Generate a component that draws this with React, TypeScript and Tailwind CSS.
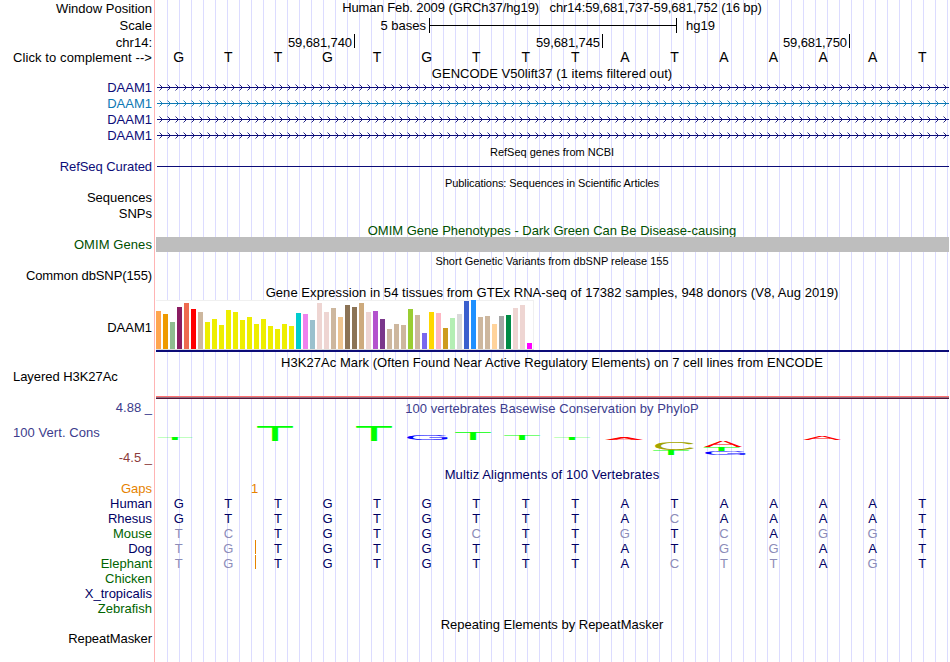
import type { ReactNode } from "react";
import clsx from "clsx";

const SEQUENCE = "GTTGTGTTTATAAAAT";

const GENES = [
  { label: "text-[#0c0c78]", line: "text-[#0c0c78]" },
  { label: "text-[#0c78b4]", line: "text-[#0c78b4]" },
  { label: "text-[#0c0c78]", line: "text-[#0c0c78]" },
  { label: "text-[#0c0c78]", line: "text-[#0c0c78]" },
];

// [height, colour] for each GTEx tissue
const TISSUES: [number, string][] = [
  [38, "#ffa54f"], [35, "#ee9a00"], [27, "#8fbc8f"], [42, "#8b1c62"], [46, "#ee6a50"], [40, "#ff0000"],
  [37, "#cdb79e"], [27, "#eeee00"], [30, "#eeee00"], [24, "#eeee00"], [39, "#eeee00"], [37, "#eeee00"],
  [29, "#eeee00"], [32, "#eeee00"], [25, "#eeee00"], [30, "#eeee00"], [23, "#eeee00"], [20, "#eeee00"],
  [25, "#eeee00"], [23, "#eeee00"], [36, "#00cdcd"], [35, "#ee82ee"], [29, "#9ac0cd"], [46, "#eed5d2"],
  [37, "#eed5d2"], [41, "#cdb79e"], [32, "#eec591"], [44, "#8b7355"], [42, "#8b7355"], [46, "#cdaa7d"],
  [37, "#eed5d2"], [38, "#b452cd"], [30, "#7a378b"], [20, "#cdb79e"], [25, "#cdb79e"], [24, "#cdb79e"],
  [40, "#9acd32"], [34, "#cdb79e"], [16, "#7a67ee"], [37, "#ffd700"], [36, "#ffb6c1"], [21, "#cd9b1d"],
  [31, "#b4eeb4"], [35, "#d9d9d9"], [48, "#3a5fcd"], [49, "#1e90ff"], [32, "#cdb79e"], [33, "#cdb79e"],
  [25, "#ffd39b"], [33, "#a6a6a6"], [34, "#008b45"], [41, "#eed5d2"], [44, "#eed5d2"], [6, "#ff00ff"],
];

const SPECIES = [
  { name: "Human", bases: SEQUENCE, green: false },
  { name: "Rhesus", bases: "GTTGTGTTTACAAAAT", green: false },
  { name: "Mouse", bases: "TCTGTGCTTGTCAGGT", green: true },
  { name: "Dog", bases: "TGTGTGTTTATGGAAT", green: false, insert: true },
  { name: "Elephant", bases: "TGTGTGTTTACTTAGT", green: true, insert: true },
  { name: "Chicken", bases: "", green: true },
  { name: "X_tropicalis", bases: "", green: false },
  { name: "Zebrafish", bases: "", green: true },
];

// ink box of each letter at font size 100: left, width, bottom, height
const INK: Record<string, [number, number, number, number]> = {
  A: [0.2, 66.3, 0, 68.8],
  C: [5, 63.3, -1, 70.8],
  G: [5, 66.6, -1, 70.8],
  T: [2, 57, 0, 68.8],
};

const LOGO = [
  { c: "T", x: 2.5, y: 21.2, w: 35, h: 1.8, fill: "#00ff00" },
  { c: "T", x: 102, y: 9, w: 36, h: 15, fill: "#00ff00" },
  { c: "T", x: 201, y: 9, w: 36, h: 15, fill: "#00ff00" },
  { c: "G", x: 252, y: 18, w: 41, h: 4.6, fill: "#0000ff" },
  { c: "T", x: 300, y: 16, w: 36, h: 7, fill: "#00ff00" },
  { c: "T", x: 349, y: 18, w: 36, h: 5, fill: "#00ff00" },
  { c: "T", x: 399, y: 21, w: 36, h: 2, fill: "#00ff00" },
  { c: "A", x: 450, y: 20.8, w: 38, h: 2, fill: "#ff0000" },
  { c: "C", x: 500, y: 25, w: 39, h: 8, fill: "#a5a500" },
  { c: "T", x: 498, y: 33, w: 36, h: 5, fill: "#00ff00" },
  { c: "A", x: 549, y: 24, w: 38, h: 6, fill: "#ff0000" },
  { c: "T", x: 548.5, y: 30, w: 36, h: 4, fill: "#00ff00" },
  { c: "G", x: 550, y: 34, w: 41, h: 4, fill: "#0000ff" },
  { c: "A", x: 648, y: 19, w: 38, h: 4, fill: "#ff0000" },
];

function Row({ label, labelClass, className, children }: {
  label?: string;
  labelClass?: string;
  className: string;
  children?: ReactNode;
}) {
  return (
    <div className={clsx("flex", className)}>
      <div className={clsx("flex w-[155px] shrink-0 items-center justify-end pr-[3px]", labelClass)}>{label}</div>
      <div className="min-w-0 flex-1">{children}</div>
    </div>
  );
}

function Title({ children, className = "h-[15px]", small }: { children: ReactNode; className?: string; small?: boolean }) {
  return (
    <Row className={className}>
      <div className={clsx("flex h-full items-center justify-center", small && "text-[11px]")}>{children}</div>
    </Row>
  );
}

function Bases({ bases, compare }: { bases: string; compare?: boolean }) {
  return (
    <div className="-ml-px grid h-full w-[793px] grid-cols-16 items-center text-center">
      {bases.split("").map((base, i) => (
        <span key={i} className={clsx(compare && (base === SEQUENCE[i] ? "text-[#000064]" : "text-[#8c8cb8]"))}>
          {base}
        </span>
      ))}
    </div>
  );
}

function Strand({ id, className }: { id: string; className: string }) {
  return (
    <svg width="792" height="16" className={clsx("ml-[2px] block", className)}>
      <defs>
        <pattern id={id} width="8" height="16" patternUnits="userSpaceOnUse">
          <path d="M2.5 4.5L5.5 7.5L2.5 10.5" fill="none" stroke="currentColor" strokeWidth="0.9" />
        </pattern>
      </defs>
      <rect width="792" height="16" fill={`url(#${id})`} />
      <rect y="7" width="792" height="1" fill="currentColor" />
    </svg>
  );
}

function Logo() {
  return (
    <svg width="794" height="49" className="block font-['Liberation_Sans',Arial,sans-serif]">
      {LOGO.map(({ c, x, y, w, h, fill }, i) => {
        const [left, width, bottom, height] = INK[c];
        const sx = w / width;
        const sy = h / height;
        return (
          <text
            key={i}
            fontSize="100"
            fill={fill}
            transform={`translate(${x - left * sx} ${y + h + bottom * sy}) scale(${sx} ${sy})`}
          >
            {c}
          </text>
        );
      })}
    </svg>
  );
}

function Position({ children, className }: { children: string; className: string }) {
  return (
    <div className={clsx("flex shrink-0 justify-end border-r border-black pr-[2px] leading-[17px] tracking-[-0.1px]", className)}>
      {children}
    </div>
  );
}

export default function App() {
  return (
    <div className="h-[662px] w-[950px] overflow-hidden bg-white pr-px font-['Liberation_Sans',Arial,sans-serif] text-[13px] leading-[15px] whitespace-pre text-black">
      <div className="h-full bg-[linear-gradient(90deg,#ffb4b4_1px,transparent_1px),repeating-linear-gradient(90deg,#dcdcff_0px,#dcdcff_1px,transparent_1px,transparent_12px)] bg-[position:154px_0,167px_0] bg-no-repeat">
        <Row label="Window Position" className="h-4">
          <div className="text-center tracking-[-0.09px]">Human Feb. 2009 (GRCh37/hg19)   chr14:59,681,737-59,681,752 (16 bp)</div>
        </Row>
        <Row label="Scale" className="h-[18px]">
          <div className="flex h-full items-center">
            <span className="w-[274px] pr-[3px] text-right">5 bases</span>
            <div className="flex h-[15px] w-[248px] items-center border-x border-black">
              <div className="h-px w-full bg-black" />
            </div>
            <span className="pl-[9px]">hg19</span>
          </div>
        </Row>
        <Row label="chr14:" className="h-4">
          <div className="flex h-[14px]">
            <Position className="w-[200px]">59,681,740</Position>
            <Position className="w-[248px]">59,681,745</Position>
            <Position className="w-[247px]">59,681,750</Position>
          </div>
        </Row>
        <Row label="Click to complement -->" labelClass="pb-px tracking-[0.09px]" className="h-4">
          <div className="h-[11px] text-[14px]">
            <Bases bases={SEQUENCE} />
          </div>
        </Row>

        {/* Genes */}
        <Title className="h-[14px] tracking-[0.05px]">GENCODE V50lift37 (1 items filtered out)</Title>
        {GENES.map((gene, i) => (
          <Row key={i} label="DAAM1" labelClass={clsx("pb-px", gene.label)} className="h-4">
            <Strand id={`strand-${i}`} className={gene.line} />
          </Row>
        ))}
        <Title className="h-4" small>RefSeq genes from NCBI</Title>
        <Row label="RefSeq Curated" labelClass="pb-px tracking-[-0.07px] text-[#0c0c78]" className="h-[14px]">
          <div className="mt-[6px] ml-[2px] h-px bg-[#0c0c78]" />
        </Row>

        {/* Literature and phenotypes */}
        <Title className="mt-px h-4 tracking-[-0.08px]" small>Publications: Sequences in Scientific Articles</Title>
        <Row label="Sequences" labelClass="pb-[2px]" className="h-[15px]" />
        <Row label="SNPs" labelClass="pb-px" className="h-4" />
        <Title className="h-[15px] pt-px text-[#005000]">OMIM Gene Phenotypes - Dark Green Can Be Disease-causing</Title>
        <Row label="OMIM Genes" labelClass="tracking-[0.08px] text-[#005000]" className="h-[15px]">
          <div className="ml-px h-full bg-[#bebebe]" />
        </Row>
        <Title className="h-[18px]" small>Short Genetic Variants from dbSNP release 155</Title>
        <Row label="Common dbSNP(155)" labelClass="pb-[3px] tracking-[-0.11px]" className="h-[14px]" />

        {/* Expression */}
        <Title className="h-4 tracking-[0.06px]">Gene Expression in 54 tissues from GTEx RNA-seq of 17382 samples, 948 donors (V8, Aug 2019)</Title>
        <Row label="DAAM1" className="h-[54px]">
          <div className="ml-px flex h-[50px] w-[378px] items-end gap-[2px] border-b border-[#dcdcdc] bg-white shadow-[inset_-1px_1px_#f0f0f0]">
            {TISSUES.map(([height, color], i) => (
              <div key={i} className="w-[5px] shrink-0" style={{ height, backgroundColor: color }} />
            ))}
          </div>
          <div className="ml-px h-[2px] bg-[#0c0c78]" />
        </Row>

        {/* Regulation */}
        <Title className="h-[17px] tracking-[0.05px]">H3K27Ac Mark (Often Found Near Active Regulatory Elements) on 7 cell lines from ENCODE</Title>
        <div className="flex h-[28px]">
          <div className="w-[156px] pl-[13px] leading-[11px] tracking-[-0.05px]">Layered H3K27Ac</div>
          <div className="flex flex-1 flex-col justify-end">
            <div className="h-px bg-[#ff7070]" />
            <div className="h-px bg-[#907080]" />
            <div className="h-px bg-[#581438]" />
          </div>
        </div>

        {/* Conservation */}
        <div className="flex h-[67px]">
          <div className="flex w-[155px] shrink-0 flex-col justify-between pt-px pr-[3px] text-right text-[#3c3c8c]">
            <div className="h-[16px]">4.88 _</div>
            <div className="h-[16px] pl-[13px] text-left tracking-[0.06px]">100 Vert. Cons</div>
            <div className="h-[16px] text-[#8c3c3c]">-4.5 _</div>
          </div>
          <div className="flex-1">
            <div className="h-[18px] pt-[2px] text-center tracking-[0.03px] text-[#3c3c8c]">100 vertebrates Basewise Conservation by PhyloP</div>
            <Logo />
          </div>
        </div>
        <Title className="h-4 tracking-[0.1px] text-[#000064]">Multiz Alignments of 100 Vertebrates</Title>
        <Row label="Gaps" labelClass="pb-px text-[#e68200]" className="h-[14px]">
          <div className="pl-[96px] leading-[14px] text-[#e68200]">1</div>
        </Row>
        {SPECIES.map((s) => (
          <Row key={s.name} label={s.name} labelClass={s.green ? "text-[#006400]" : "text-[#000064]"} className="h-[15px]">
            <div className="relative h-full">
              <Bases bases={s.bases} compare />
              {s.insert && <div className="absolute top-[-1px] left-[100px] h-[14px] w-px bg-[#e68200]" />}
            </div>
          </Row>
        ))}
        <Title className="h-4">Repeating Elements by RepeatMasker</Title>
        <Row label="RepeatMasker" labelClass="pb-px tracking-[-0.06px]" className="h-[14px]" />
      </div>
    </div>
  );
}
